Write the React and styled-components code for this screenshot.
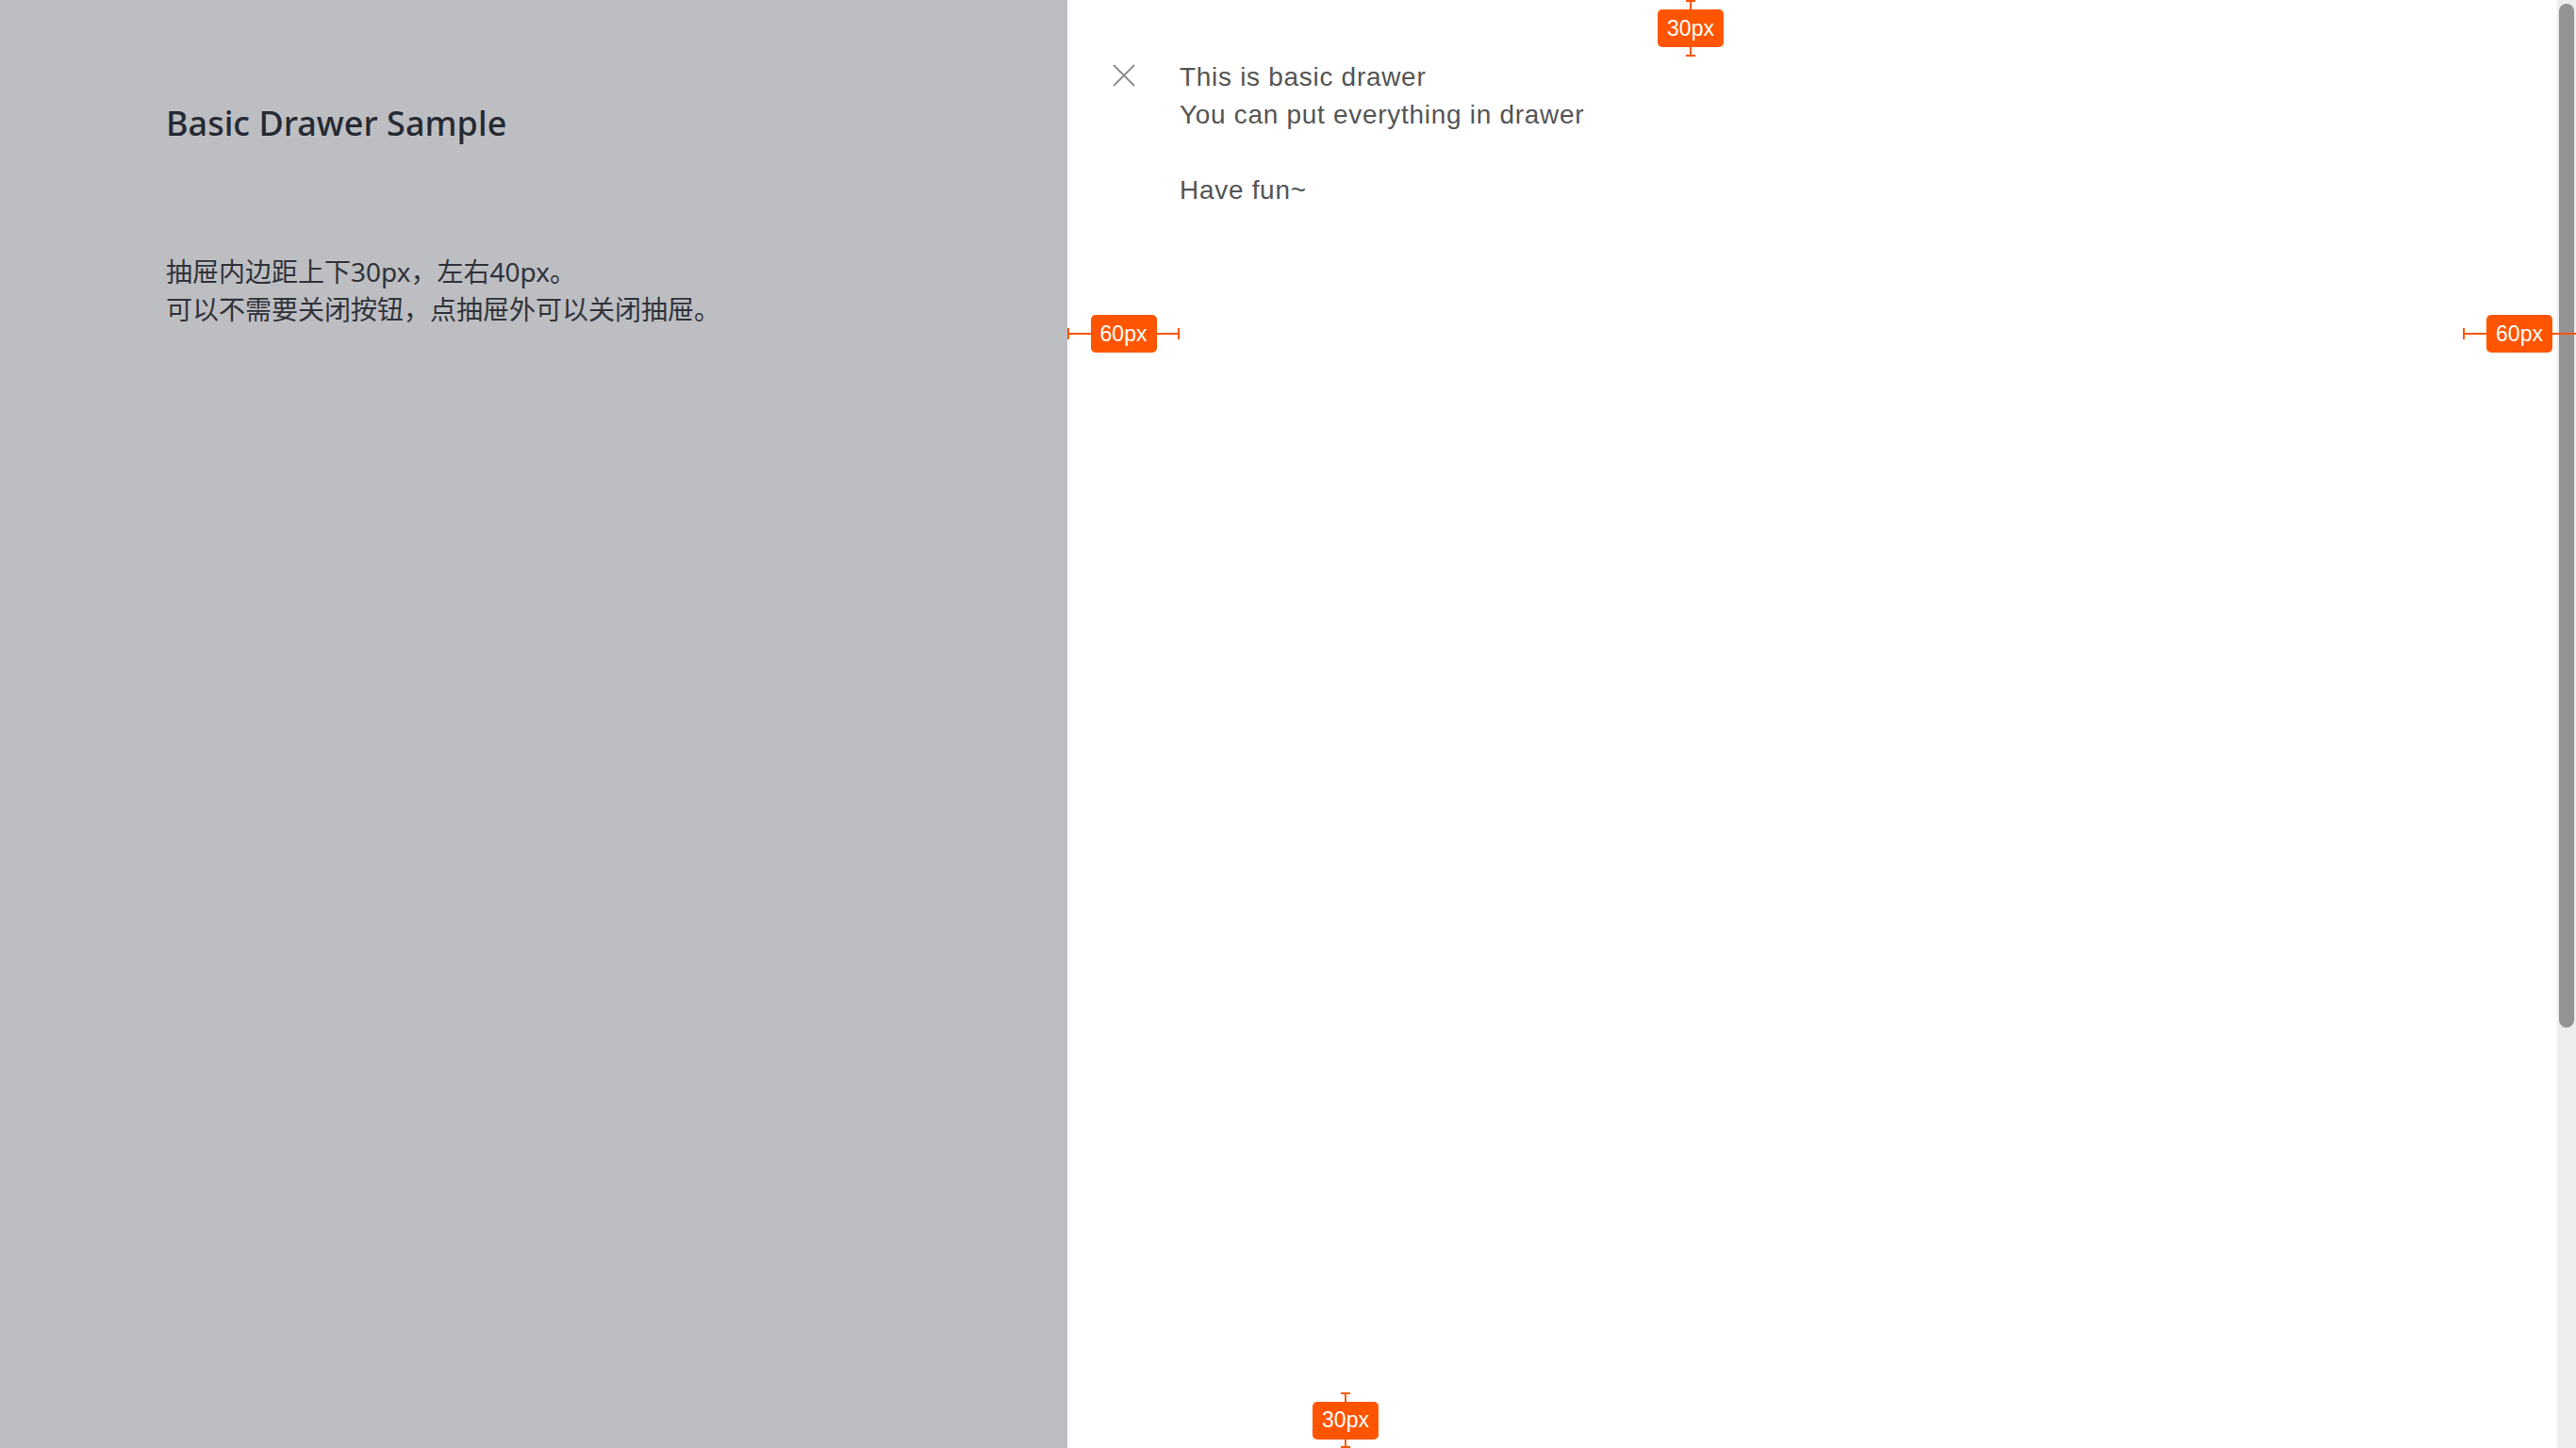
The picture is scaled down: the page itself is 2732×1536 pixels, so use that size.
import React from "react";
import styled, { createGlobalStyle } from "styled-components";

const Global = createGlobalStyle`
  html, body { margin: 0; padding: 0; }
  body {
    font-family: "Noto Sans", "Noto Sans CJK SC", sans-serif;
    overflow: hidden;
  }
`;

const Page = styled.div`
  position: relative;
  display: flex;
  width: 2732px;
  height: 1536px;
  overflow: hidden;
`;

const Backdrop = styled.section`
  width: 1132px;
  flex: none;
  background: #bdbec2;
  padding: 106px 0 0 176px;
  box-sizing: border-box;
`;

const Title = styled.h1`
  margin: 0;
  font-size: 36px;
  line-height: 50px;
  font-weight: 500;
  color: #262a33;
`;

const Desc = styled.p`
  margin: 112px 0 0;
  font-size: 28px;
  line-height: 40px;
  color: #30333a;
  font-family: "Noto Sans", "Noto Sans CJK SC", sans-serif;
`;

const Drawer = styled.section`
  flex: 1;
  display: flex;
  align-items: flex-start;
  background: #ffffff;
  padding: 60px 120px 60px 0;
`;

const CloseCol = styled.div`
  width: 119px;
  height: 40px;
  flex: none;
  display: flex;
  align-items: center;
  justify-content: center;
`;

const CloseBtn = styled.button`
  border: 0;
  background: none;
  padding: 0;
  width: 24px;
  height: 24px;
  display: flex;
  cursor: pointer;
`;

const Body = styled.div`
  padding-top: 2px;
  font-family: "Liberation Sans", Arial, sans-serif;
  font-size: 28px;
  line-height: 40px;
  letter-spacing: 0.7px;
  color: #555555;
`;

const Line = styled.div`
  min-height: 40px;
`;

const Scroll = styled.div`
  width: 20px;
  flex: none;
  background: #ededf0;
  padding: 4px 2px 0;
  box-sizing: border-box;
`;

const Thumb = styled.div`
  height: 1086px;
  border-radius: 8px;
  background: #939393;
`;

const ORANGE = "#ff5500";

const Measure = styled.div`
  position: absolute;
  background: ${ORANGE};
  display: flex;
  align-items: center;
  justify-content: center;
  ${(p) =>
    p.$vertical
      ? `width: 2px; margin-left: -1px; flex-direction: column;`
      : `height: 2px; margin-top: -1px;`}
`;

const Cap = styled.span`
  position: absolute;
  background: ${ORANGE};
  ${(p) =>
    p.$vertical
      ? `height: 2px; width: 10px; left: -4px; ${p.$end ? "bottom: 0;" : "top: 0;"}`
      : `width: 2px; height: 12px; top: -5px; ${p.$end ? "right: 0;" : "left: 0;"}`}
`;

const Badge = styled.span`
  flex: none;
  width: 70px;
  height: 40px;
  border-radius: 5px;
  background: ${ORANGE};
  color: #ffffff;
  font-family: "Liberation Sans", Arial, sans-serif;
  font-size: 23px;
  display: flex;
  align-items: center;
  justify-content: center;
`;

const marks = [
  { v: true, x: 1793, y: 0, len: 60, label: "30px" },
  { v: false, x: 1132, y: 354, len: 119, label: "60px" },
  { v: false, x: 2612, y: 354, len: 120, label: "60px", noEnd: true },
  { v: true, x: 1427, y: 1477, len: 59, label: "30px", noEnd: true },
];

export default function App() {
  return (
    <>
      <Global />
      <Page>
        <Backdrop>
          <Title>Basic Drawer Sample</Title>
          <Desc>
            抽屉内边距上下30px，左右40px。
            <br />
            可以不需要关闭按钮，点抽屉外可以关闭抽屉。
          </Desc>
        </Backdrop>
        <Drawer>
          <CloseCol>
            <CloseBtn aria-label="close">
              <svg width="24" height="24" viewBox="0 0 24 24">
                <path
                  d="M1 1 L23 23 M23 1 L1 23"
                  stroke="#8c8c8c"
                  strokeWidth="1.8"
                  fill="none"
                />
              </svg>
            </CloseBtn>
          </CloseCol>
          <Body>
            <Line>This is basic drawer</Line>
            <Line>You can put everything in drawer</Line>
            <Line />
            <Line>Have fun~</Line>
          </Body>
        </Drawer>
        <Scroll>
          <Thumb />
        </Scroll>
        {marks.map((m, i) => (
          <Measure
            key={i}
            $vertical={m.v}
            style={
              m.v
                ? { left: m.x, top: m.y, height: m.len }
                : { left: m.x, top: m.y, width: m.len }
            }
          >
            <Cap $vertical={m.v} />
            {(!m.noEnd || m.v) && <Cap $vertical={m.v} $end />}
            <Badge>{m.label}</Badge>
          </Measure>
        ))}
      </Page>
    </>
  );
}
